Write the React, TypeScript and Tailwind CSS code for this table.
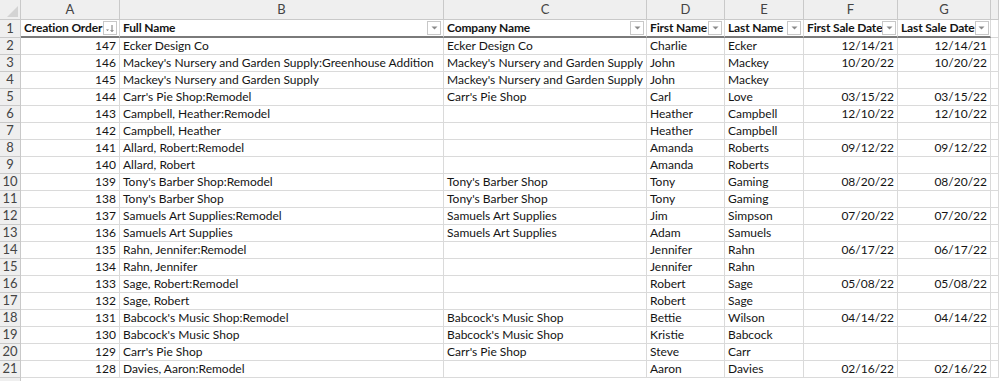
import React from "react";

type Row = [string, string, string, string, string, string, string];

const rows: Row[] = [
  ["147", "Ecker Design Co", "Ecker Design Co", "Charlie", "Ecker", "12/14/21", "12/14/21"],
  ["146", "Mackey's Nursery and Garden Supply:Greenhouse Addition", "Mackey's Nursery and Garden Supply", "John", "Mackey", "10/20/22", "10/20/22"],
  ["145", "Mackey's Nursery and Garden Supply", "Mackey's Nursery and Garden Supply", "John", "Mackey", "", ""],
  ["144", "Carr's Pie Shop:Remodel", "Carr's Pie Shop", "Carl", "Love", "03/15/22", "03/15/22"],
  ["143", "Campbell, Heather:Remodel", "", "Heather", "Campbell", "12/10/22", "12/10/22"],
  ["142", "Campbell, Heather", "", "Heather", "Campbell", "", ""],
  ["141", "Allard, Robert:Remodel", "", "Amanda", "Roberts", "09/12/22", "09/12/22"],
  ["140", "Allard, Robert", "", "Amanda", "Roberts", "", ""],
  ["139", "Tony's Barber Shop:Remodel", "Tony's Barber Shop", "Tony", "Gaming", "08/20/22", "08/20/22"],
  ["138", "Tony's Barber Shop", "Tony's Barber Shop", "Tony", "Gaming", "", ""],
  ["137", "Samuels Art Supplies:Remodel", "Samuels Art Supplies", "Jim", "Simpson", "07/20/22", "07/20/22"],
  ["136", "Samuels Art Supplies", "Samuels Art Supplies", "Adam", "Samuels", "", ""],
  ["135", "Rahn, Jennifer:Remodel", "", "Jennifer", "Rahn", "06/17/22", "06/17/22"],
  ["134", "Rahn, Jennifer", "", "Jennifer", "Rahn", "", ""],
  ["133", "Sage, Robert:Remodel", "", "Robert", "Sage", "05/08/22", "05/08/22"],
  ["132", "Sage, Robert", "", "Robert", "Sage", "", ""],
  ["131", "Babcock's Music Shop:Remodel", "Babcock's Music Shop", "Bettie", "Wilson", "04/14/22", "04/14/22"],
  ["130", "Babcock's Music Shop", "Babcock's Music Shop", "Kristie", "Babcock", "", ""],
  ["129", "Carr's Pie Shop", "Carr's Pie Shop", "Steve", "Carr", "", ""],
  ["128", "Davies, Aaron:Remodel", "", "Aaron", "Davies", "02/16/22", "02/16/22"],
];

const headers = ["Creation Order", "Full Name", "Company Name", "First Name", "Last Name", "First Sale Date", "Last Sale Date"];
const letters = ["A", "B", "C", "D", "E", "F", "G", ""];
const rightAligned = [true, false, false, false, false, true, true];

const FilterButton = ({ sorted }: { sorted?: boolean }) => (
  <span className="w-[14px] h-[14px] shrink-0 border border-[#c8c8c8] bg-white flex items-center justify-center">
    {sorted ? (
      <svg width="10" height="9" viewBox="0 0 10 9">
        <path d="M1 5.5 L4 5.5 L2.5 7 Z" fill="#777" />
        <path d="M7 1 L7 7.5 M5.6 6 L7 7.6 L8.4 6" stroke="#777" strokeWidth="1" fill="none" />
      </svg>
    ) : (
      <svg width="7" height="4" viewBox="0 0 7 4">
        <path d="M0.5 0.5 L6.5 0.5 L3.5 3.5 Z" fill="#8a8a8a" />
      </svg>
    )}
  </span>
);

const App = () => {
  return (
    <div className="w-[999px] h-[381px] overflow-hidden bg-white text-[#141414] font-['Lato','Liberation_Sans',sans-serif] text-[12px]">
      <div className="grid grid-cols-[21px_99px_324px_203px_78px_79px_94px_93px_1fr] grid-rows-[20px_18px_repeat(21,17px)]">
        {/* column letters */}
        <div className="bg-[#efefef] border-r border-b border-[#c9c9c9] relative">
          <svg className="absolute right-[2px] bottom-[2px]" width="11" height="11" viewBox="0 0 11 11">
            <path d="M11 0 L11 11 L0 11 Z" fill="#d3d3d3" />
          </svg>
        </div>
        {letters.map((l, i) => (
          <div key={"c" + i} className="bg-[#efefef] border-r border-b border-[#c9c9c9] flex items-center justify-center text-[#444] text-[13px]">
            {l}
          </div>
        ))}

        {/* header row */}
        <div className="bg-[#efefef] border-r border-b border-[#c9c9c9] flex items-center justify-center text-[#444] text-[13px]">1</div>
        {headers.map((h, i) => (
          <div key={"h" + i} className="border-r border-[#d9d9d9] border-b-2 border-b-[#7a7a7a] flex items-center justify-between pl-[3px] pr-[2px] font-bold tracking-[-0.15px]">
            <span className="whitespace-nowrap">{h}</span>
            <FilterButton sorted={i === 0} />
          </div>
        ))}
        <div className="border-r border-b border-[#d9d9d9]" />

        {/* data */}
        {rows.map((r, ri) => (
          <React.Fragment key={ri}>
            <div className="bg-[#efefef] border-r border-b border-[#c9c9c9] flex items-center justify-center text-[#444] text-[13px]">{ri + 2}</div>
            {r.map((v, ci) => (
              <div
                key={ci}
                className={
                  "border-r border-b border-[#dadada] flex items-center px-[3px] whitespace-nowrap overflow-hidden " +
                  (rightAligned[ci] ? "justify-end" : "justify-start")
                }
              >
                {v}
              </div>
            ))}
            <div className="border-r border-b border-[#dadada]" />
          </React.Fragment>
        ))}
        <div className="bg-[#efefef] border-r border-[#c9c9c9]" />
      </div>
    </div>
  );
};

export default App;
